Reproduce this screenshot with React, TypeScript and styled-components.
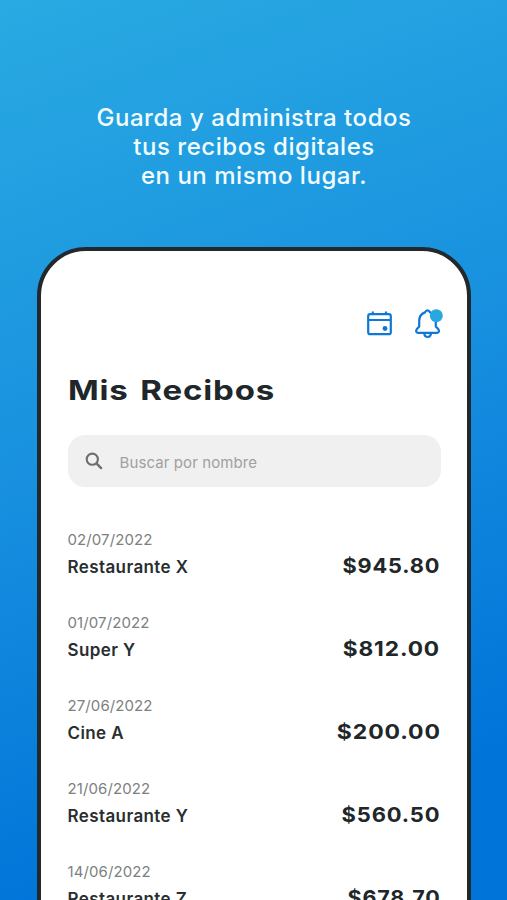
import React from 'react';
import styled, { createGlobalStyle } from 'styled-components';

const GlobalStyle = createGlobalStyle`
  * { box-sizing: border-box; }
  body { margin: 0; overflow: hidden; }
`;

const Page = styled.main`
  display: flex;
  flex-direction: column;
  align-items: center;
  height: 900px;
  padding-top: 103px;
  overflow: hidden;
  background: linear-gradient(160deg, #29aae2 0%, #1890df 45%, #0074d9 86%);
  font-family: Inter, sans-serif;
`;

const Headline = styled.h1`
  margin: 0;
  height: 144px;
  flex: none;
  color: #f2fcff;
  font-size: 24px;
  font-weight: 500;
  line-height: 29px;
  text-align: center;
  white-space: nowrap;
`;

const Line = styled.span<{ $spacing: number }>`
  display: block;
  padding-left: 1px;
  letter-spacing: ${(p) => p.$spacing}px;
`;

const Phone = styled.section`
  flex: none;
  width: 434px;
  height: 720px;
  padding: 58px 26px 0 27px;
  border: 4.5px solid #22292c;
  border-radius: 49px;
  background: #fff;
`;

const Actions = styled.div`
  display: flex;
  justify-content: flex-end;
  gap: 20px;
  height: 32px;
  margin-right: -2px;
`;

const Title = styled.h2<{ $stretch: number }>`
  width: max-content;
  margin: 31px 0 0;
  color: #202629;
  font-size: 27.5px;
  font-weight: 700;
  line-height: 36px;
  letter-spacing: 0.7px;
  word-spacing: 2.5px;
  transform: scaleX(${(p) => p.$stretch});
  transform-origin: left;
`;

const Search = styled.label`
  display: flex;
  align-items: center;
  height: 52px;
  margin-top: 27px;
  padding: 0 17px;
  gap: 17px;
  border-radius: 17px;
  background: #f0f0f0;
`;

const SearchInput = styled.input`
  flex: 1;
  min-width: 0;
  padding: 2px 0 0;
  border: 0;
  outline: 0;
  background: transparent;
  font: 400 15px Inter, sans-serif;
  letter-spacing: 0.1px;
  &::placeholder { color: #a0a0a0; opacity: 1; }
`;

const List = styled.ul`
  margin: 41px 0 0;
  padding: 0;
  list-style: none;
`;

const Receipt = styled.li`
  display: flex;
  justify-content: space-between;
  height: 83px;
`;

const Dated = styled.time`
  display: block;
  color: #7d7f80;
  font-size: 15px;
  line-height: 23px;
  letter-spacing: 0.1px;
`;

const Name = styled.div`
  color: #292e30;
  font-size: 17px;
  font-weight: 600;
  line-height: 32px;
  letter-spacing: 0.4px;
`;

const Amount = styled.strong<{ $stretch: number }>`
  height: 26px;
  margin-top: 25px;
  color: #202629;
  font-size: 20.5px;
  font-weight: 700;
  line-height: 26px;
  letter-spacing: 0.8px;
  transform: scaleX(${(p) => p.$stretch});
  transform-origin: right;
`;

const receipts = [
  { date: '02/07/2022', name: 'Restaurante X', amount: '$945.80', stretch: 1.06 },
  { date: '01/07/2022', name: 'Super Y', amount: '$812.00', stretch: 1.105 },
  { date: '27/06/2022', name: 'Cine A', amount: '$200.00', stretch: 1.12 },
  { date: '21/06/2022', name: 'Restaurante Y', amount: '$560.50', stretch: 1.07 },
  { date: '14/06/2022', name: 'Restaurante Z', amount: '$678.70', stretch: 1.05 },
];

const CalendarIcon = () => (
  <svg width="28" height="32" viewBox="0 0 28 32" fill="none" stroke="#0d78d5" strokeWidth="2.2">
    <rect x="3.2" y="5.2" width="22.6" height="20" rx="2" />
    <path d="M3 11h22.5M7.8 2.5v3M21 2.5v3" />
    <circle cx="20" cy="19.5" r="2.4" fill="#0d78d5" stroke="none" />
  </svg>
);

const BellIcon = () => (
  <svg width="30" height="32" viewBox="0 0 30 32" fill="none" stroke="#0d78d5" strokeWidth="2.2" strokeLinejoin="round" strokeLinecap="round">
    <path d="M14.5 1.4c-1.2 0-2 .8-2.6 2C8 4.9 6.2 8 6.2 12v5.5l-2.5 2.8c-1.2 1.8-.5 3.5 1.2 3.5h19.3c1.7 0 2.4-1.7 1.2-3.5l-2.6-2.8V12c0-4-1.8-7.1-5.7-8.6-.6-1.2-1.4-2-2.6-2Z" />
    <path d="M11.2 24.7c.3 2.2 1.5 3.3 3.4 3.3s3.1-1.1 3.4-3.3" />
    <circle cx="23.3" cy="6.7" r="6.5" fill="#2ba7df" stroke="none" />
  </svg>
);

const SearchIcon = () => (
  <svg width="18" height="18" viewBox="0 0 18 18" fill="none" stroke="#6c6f70" strokeLinecap="round">
    <circle cx="7.3" cy="7.2" r="5.6" strokeWidth="2.1" />
    <path d="m11.7 11.7 4.4 4.4" strokeWidth="2.4" />
  </svg>
);

export default function App() {
  return (
    <>
      <GlobalStyle />
      <Page>
        <Headline>
          <Line $spacing={0.56}>Guarda y administra todos</Line>
          <Line $spacing={0.54}>tus recibos digitales</Line>
          <Line $spacing={0.52}>en un mismo lugar.</Line>
        </Headline>
        <Phone>
          <Actions><CalendarIcon /><BellIcon /></Actions>
          <Title $stretch={1.2}>Mis Recibos</Title>
          <Search><SearchIcon /><SearchInput placeholder="Buscar por nombre" /></Search>
          <List>
            {receipts.map((r) => (
              <Receipt key={r.date}>
                <div><Dated>{r.date}</Dated><Name>{r.name}</Name></div>
                <Amount $stretch={r.stretch}>{r.amount}</Amount>
              </Receipt>
            ))}
          </List>
        </Phone>
      </Page>
    </>
  );
}
